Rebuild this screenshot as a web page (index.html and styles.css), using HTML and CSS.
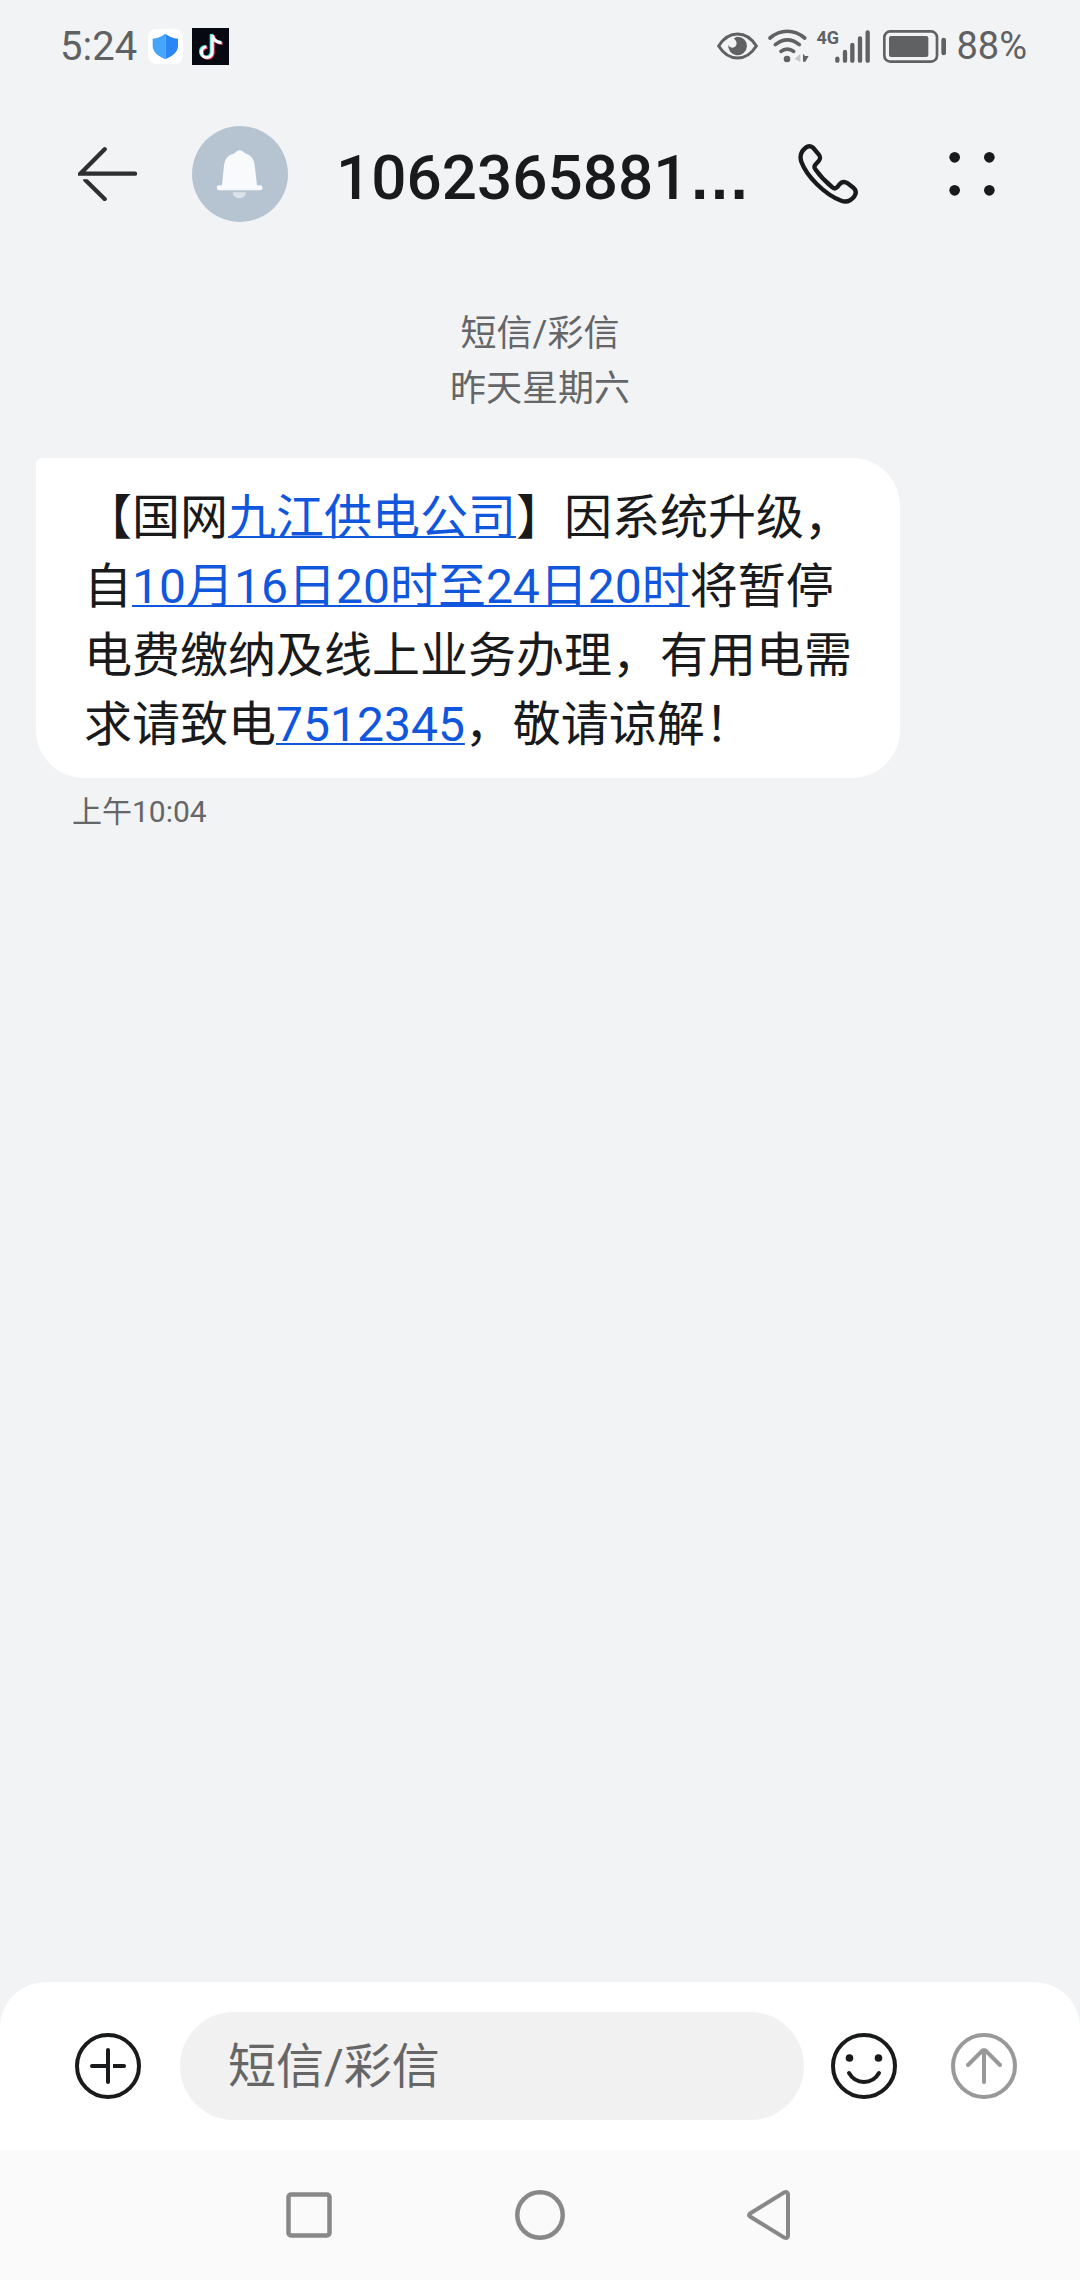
FILE: index.html
```html
<!DOCTYPE html>
<html lang="zh-CN">
<head>
<meta charset="utf-8">
<meta name="viewport" content="width=device-width, initial-scale=1">
<title>1062365881</title>
<link rel="stylesheet" href="styles.css">
</head>
<body>
<div class="status">
  <time class="clock">5:24</time>
  <svg class="app-shield" viewBox="0 0 105 105" aria-hidden="true">
    <rect width="105" height="105" rx="24" fill="#fff"/>
    <path d="M52 14 C64 24 76 27 90 29 V52 C89 70 73 82 52 91Z" fill="#2b86f5"/>
    <path d="M52 14 C40 24 28 27 14 29 V52 C15 70 31 82 52 91Z" fill="#45a5fb"/>
  </svg>
  <svg class="app-note" viewBox="0 0 110 110" aria-hidden="true">
    <rect width="110" height="110" fill="#060812"/>
    <g fill="none" stroke-width="9">
      <path d="M57 18 V71 A16 16 0 1 1 40 54 M57 18 C60 33 70 41 85 42" stroke="#35e5df"/>
      <path d="M63 22 V75 A16 16 0 1 1 46 58 M63 22 C66 37 76 45 91 46" stroke="#f53a5c"/>
      <path d="M60 20 V73 A16 16 0 1 1 43 56 M60 20 C63 35 73 43 88 44" stroke="#fff"/>
    </g>
  </svg>
  <div class="indicators">
    <svg class="eye" viewBox="0 0 123 84" aria-hidden="true">
      <path d="M5 42 C35 -6 88 -6 118 42 C88 90 35 90 5 42Z" fill="none" stroke="#5f6163" stroke-width="9"/>
      <path d="M62 14 A28 28 0 1 1 34 38 C38 48 50 50 56 42 C62 34 58 24 50 20 C54 16 58 14 62 14Z" fill="#5f6163"/>
    </svg>
    <svg class="wifi" viewBox="0 0 123 102" aria-hidden="true">
      <g fill="none" stroke="#5f6163" stroke-width="11" stroke-linecap="round">
        <path d="M6 27 C38 0 78 0 110 27"/>
        <path d="M22 47 C45 29 71 29 94 47"/>
        <path d="M39 67 C50 58 66 58 77 67"/>
      </g>
      <circle cx="57" cy="90" r="10" fill="#5f6163"/>
      <path d="M97 74 V98 L80 90Z" fill="#c3c5c7"/>
      <path d="M105 74 L111 81 L122 81 L112 98 H105Z" fill="#5f6163"/>
    </svg>
    <div class="cell">
      <span class="network">4G</span>
      <svg class="bars" viewBox="0 0 105 99" aria-hidden="true">
        <g stroke="#5f6163" stroke-width="13" stroke-linecap="round">
          <path d="M7 86 V92 M30 66 V92 M52 45 V92 M75 25 V92 M98 7 V92"/>
        </g>
      </svg>
    </div>
    <svg class="battery" viewBox="0 0 189 99" aria-hidden="true">
      <rect x="4" y="4" width="158" height="91" rx="18" fill="none" stroke="#5f6163" stroke-width="8"/>
      <rect x="18" y="18" width="118" height="63" rx="6" fill="#5f6163"/>
      <rect x="175" y="23" width="14" height="53" rx="7" fill="#5f6163"/>
    </svg>
    <span class="charge">88%</span>
  </div>
</div>

<header class="topbar">
  <button class="icon-button back" aria-label="返回">
    <svg viewBox="0 0 180 162">
      <g fill="none" stroke="#2d2f30" stroke-width="13" stroke-linecap="round">
        <path d="M80 7 L7 80 H171"/>
        <path d="M22 99 L80 156"/>
      </g>
      <path d="M8 87 H40 V97 H0Z" fill="#f1f3f5"/>
    </svg>
  </button>
  <svg class="avatar" viewBox="0 0 288 288" aria-hidden="true">
    <circle cx="144" cy="144" r="144" fill="#b6c4d1"/>
    <path d="M90 178 L96 118 C99 95 110 87 125 83 C132 80 134 73 143 73 C152 73 154 80 162 83 C177 88 186 98 188 118 L195 178 H204 a7.500 7.500 0 0 1 0 15 H82 a7.500 7.500 0 0 1 0 -15Z" fill="#f8fafb"/>
    <path d="M122 199 H162 A20 18 0 0 1 122 199Z" fill="#dbe2e8"/>
  </svg>
  <h1 class="title">1062365881<span class="more-digits">…</span></h1>
  <button class="icon-button call" aria-label="拨打电话">
    <svg viewBox="0 0 180 180">
      <path d="M22 12 C30 5 40 5 46 12 L62 31 C68 38 67 46 62 51 L53 61 C48 66 49 72 53 77 C68 98 84 114 102 129 C107 134 113 134 118 129 L122 124 C130 113 140 112 149 118 L166 131 C174 138 175 148 169 157 C158 171 145 176 130 170 C80 152 25 95 10 53 C4 35 10 22 22 12Z" fill="none" stroke="#191a1b" stroke-width="13"/>
    </svg>
  </button>
  <button class="icon-button menu" aria-label="更多">
    <svg viewBox="0 0 138 132">
      <g fill="#191a1b"><circle cx="17" cy="16" r="16"/><circle cx="121" cy="16" r="16"/><circle cx="17" cy="115" r="16"/><circle cx="121" cy="115" r="16"/></g>
    </svg>
  </button>
</header>

<main class="thread">
  <p class="day">短信/彩信<br>昨天星期六</p>
  <article class="message">
    <p class="bubble">【国网<a href="#company">九江供电公司</a>】因系统升级，自<a href="#date">10月16日20时至24日20时</a>将暂停电费缴纳及线上业务办理，有用电需求请致电<a href="tel:7512345">7512345</a>，敬请谅解！</p>
    <time class="sent">上午10:04</time>
  </article>
</main>

<form class="composer">
  <button type="button" class="icon-button round" aria-label="添加">
    <svg viewBox="0 0 66 66">
      <g fill="none" stroke="#191a1b" stroke-width="4" stroke-linecap="round">
        <circle cx="33" cy="33" r="31"/>
        <path d="M33 17 V49 M17 33 H33"/>
        <path d="M40 33 H49"/>
      </g>
      <path d="M38 31 h2 v4 h-2z" fill="#191a1b"/>
    </svg>
  </button>
  <input class="field" type="text" placeholder="短信/彩信" aria-label="短信/彩信">
  <button type="button" class="icon-button round" aria-label="表情">
    <svg viewBox="0 0 66 66">
      <g fill="none" stroke="#191a1b" stroke-width="4" stroke-linecap="round">
        <circle cx="33" cy="33" r="31"/>
        <path d="M18 40 C25 52 41 52 48 40"/>
      </g>
      <circle cx="18.500" cy="25" r="3.800" fill="#191a1b"/><circle cx="47.500" cy="25" r="3.800" fill="#191a1b"/>
    </svg>
  </button>
  <button type="submit" class="icon-button round send" aria-label="发送">
    <svg viewBox="0 0 66 66">
      <g fill="none" stroke="#999" stroke-width="4" stroke-linecap="round" stroke-linejoin="round">
        <circle cx="33" cy="33" r="31"/>
        <path d="M33 17 V49 M17 32 L31 18 Q33 16 35 18 L49 32"/>
      </g>
    </svg>
  </button>
</form>

<nav class="system-nav">
  <button class="icon-button key" aria-label="最近任务">
    <svg viewBox="0 0 52 52"><rect x="5.500" y="5.500" width="41" height="41" rx="2.500" fill="none" stroke="#888" stroke-width="4.500"/></svg>
  </button>
  <button class="icon-button key" aria-label="主屏幕">
    <svg viewBox="0 0 52 52"><circle cx="26" cy="26" r="22.700" fill="none" stroke="#888" stroke-width="4.500"/></svg>
  </button>
  <button class="icon-button key" aria-label="返回上一级">
    <svg viewBox="0 0 52 52"><path d="M5 24.500 L39 3.500 Q43 2 43 5.500 V46.500 Q43 50 39 48.500 L5 27.500 Q3 26 5 24.500Z" fill="none" stroke="#888" stroke-width="4"/></svg>
  </button>
</nav>
</body>
</html>
```

FILE: styles.css
```css
* { box-sizing: border-box; }

body {
  margin: 0;
  min-height: 100vh;
  display: flex;
  flex-direction: column;
  background: #f1f3f5;
  color: #191a1b;
  font-family: Roboto, "Noto Sans CJK SC", sans-serif;
}

h1, p { margin: 0; }
svg { display: block; flex: none; }

.icon-button {
  flex: none;
  padding: 0;
  border: 0;
  background: none;
  cursor: pointer;
}
.icon-button svg { width: 100%; height: 100%; }

/* Status bar */
.status {
  display: flex;
  align-items: center;
  height: 92px;
  padding: 0 53px 0 60px;
  color: #5f6163;
  font-size: 38px;
}
.clock { margin-right: 11px; font-size: 40px; }
.app-shield { width: 35px; height: 35px; margin-right: 9px; }
.app-note { width: 37px; height: 37px; }
.indicators {
  display: flex;
  align-items: center;
  margin-left: auto;
}
.eye { width: 41px; height: 28px; margin-right: 10px; }
.wifi { width: 41px; height: 34px; margin-right: 7px; }
.cell { display: flex; align-items: flex-start; margin-right: 13px; }
.network {
  width: 19px;
  font-family: "Liberation Sans Narrow", Roboto, sans-serif;
  font-size: 18px;
  line-height: 16px;
  font-weight: 700;
}
.bars { width: 35px; height: 33px; }
.battery { width: 63px; height: 33px; margin-right: 10px; }

/* Conversation header */
.topbar {
  display: flex;
  align-items: center;
  height: 164px;
  padding: 0 85px 0 78px;
}
.back { width: 60px; height: 54px; margin-right: 54px; }
.avatar { width: 96px; height: 96px; margin-right: 48px; }
.title {
  flex: 1;
  min-width: 0;
  padding-top: 8px;
  overflow: hidden;
  white-space: nowrap;
  font-size: 62px;
  line-height: 72px;
  font-weight: 500;
}
.more-digits { font-family: "Liberation Sans", sans-serif; font-weight: 700; }
.call { width: 60px; height: 60px; margin-right: 91px; }
.menu { width: 46px; height: 44px; }

/* Messages */
.thread { flex: 1; padding: 51px 36px; }
.day {
  color: #646668;
  font-size: 36px;
  line-height: 55px;
  text-align: center;
}
.message { max-width: 864px; margin-top: 41px; }
.bubble {
  padding: 25px 40px 19px 48px;
  border-radius: 6px 48px 48px 48px;
  background: #fff;
  font-size: 48px;
  line-height: 69px;
  text-spacing-trim: space-all;
}
.bubble a {
  color: #1057de;
  text-decoration: underline 2px;
  text-underline-offset: 2px;
  text-decoration-skip-ink: none;
}
.sent {
  display: block;
  padding: 12px 36px;
  color: #646668;
  font-size: 30px;
  line-height: 44px;
}

/* Message entry */
.composer {
  display: flex;
  align-items: center;
  padding: 30px 63px 30px 75px;
  border-radius: 46px 46px 0 0;
  background: #fff;
}
.round { width: 66px; height: 66px; }
.field {
  flex: 1;
  min-width: 0;
  height: 108px;
  margin: 0 27px 0 39px;
  padding: 0 48px;
  border: 0;
  border-radius: 54px;
  background: #f1f1f1;
  color: #191a1b;
  font: inherit;
  font-size: 48px;
}
.field::placeholder { color: #666; opacity: 1; }
.send { margin-left: 54px; }

.system-nav {
  display: flex;
  justify-content: center;
  align-items: center;
  gap: 179px;
  height: 130px;
  background: #fafafa;
}
.key { width: 52px; height: 52px; }
.key:focus-visible { outline: 2px solid #1057de; }
```
